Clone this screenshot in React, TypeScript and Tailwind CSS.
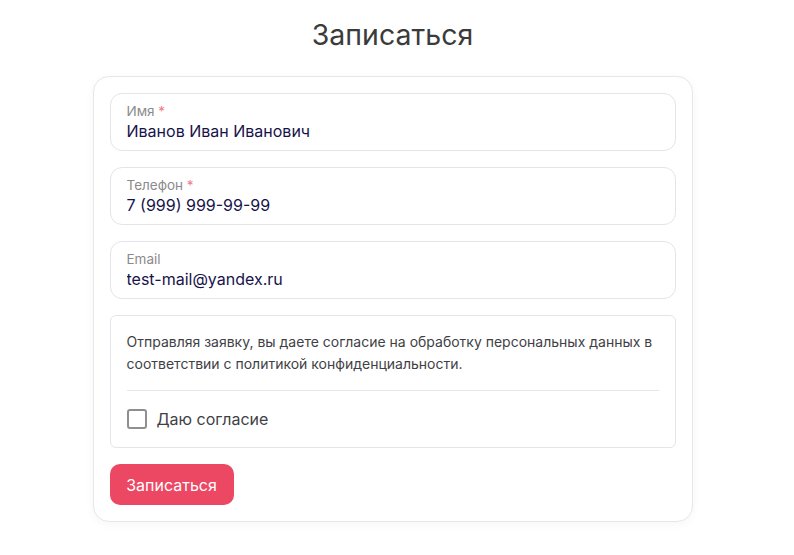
import React, { useState } from 'react';

const FIELDS = [
  { id: 'name', label: 'Имя', required: true, value: 'Иванов Иван Иванович' },
  { id: 'phone', label: 'Телефон', required: true, value: '7 (999) 999-99-99' },
  { id: 'email', label: 'Email', required: false, value: 'test-mail@yandex.ru' },
];

export default function App() {
  const [values, setValues] = useState<Record<string, string>>(
    Object.fromEntries(FIELDS.map((f) => [f.id, f.value]))
  );
  const [agreed, setAgreed] = useState(false);

  return (
    <div className="min-h-screen bg-white font-['Inter',sans-serif] flex flex-col items-center pt-[15px] pr-[9px]">
      <h1 className="text-[28.5px] leading-[40px] text-[#3b3b3b] font-normal">Записаться</h1>

      <form
        onSubmit={(e) => e.preventDefault()}
        className="mt-[21px] w-[600px] bg-white border border-[#e6e7ec] rounded-[16px] shadow-[0_2px_10px_rgba(0,0,0,0.04)] p-4 flex flex-col gap-4"
      >
        {FIELDS.map((f) => (
          <label
            key={f.id}
            className="block border border-[#e3e5ea] rounded-[12px] px-4 pt-[9px] pb-[7px] h-[58px]"
          >
            <span className="block text-[13.5px] leading-[16px] text-[#8b8b8b]">
              {f.label}
              {f.required && <span className="text-[#f2788c]"> *</span>}
            </span>
            <input
              value={values[f.id]}
              onChange={(e) => setValues({ ...values, [f.id]: e.target.value })}
              className="block w-full text-[16px] leading-[24px] text-[#17134a] outline-none bg-transparent"
            />
          </label>
        ))}

        <div className="border border-[#e3e5ea] rounded-[6px] px-4 pt-[15px] pb-[16px]">
          <p className="text-[14px] leading-[22px] text-[#3f3f46]">
            Отправляя заявку, вы даете согласие на обработку персональных данных в соответствии с политикой конфиденциальности.
          </p>
          <div className="h-px bg-[#e5e6eb] mt-[15px] mb-[16px]" />
          <button
            type="button"
            onClick={() => setAgreed(!agreed)}
            className="flex items-center gap-[10px]"
          >
            <span className="w-5 h-5 border-2 border-[#8f8f8f] rounded-[3px] flex items-center justify-center">
              {agreed && <span className="w-2.5 h-2.5 bg-[#ec4763] rounded-[1px]" />}
            </span>
            <span className="text-[16px] leading-[24px] text-[#3f3f46]">Даю согласие</span>
          </button>
        </div>

        <button
          type="submit"
          className="self-start h-[41px] w-[124px] rounded-[10px] bg-[#ec4763] text-white text-[16px]"
        >
          Записаться
        </button>
      </form>
    </div>
  );
}
